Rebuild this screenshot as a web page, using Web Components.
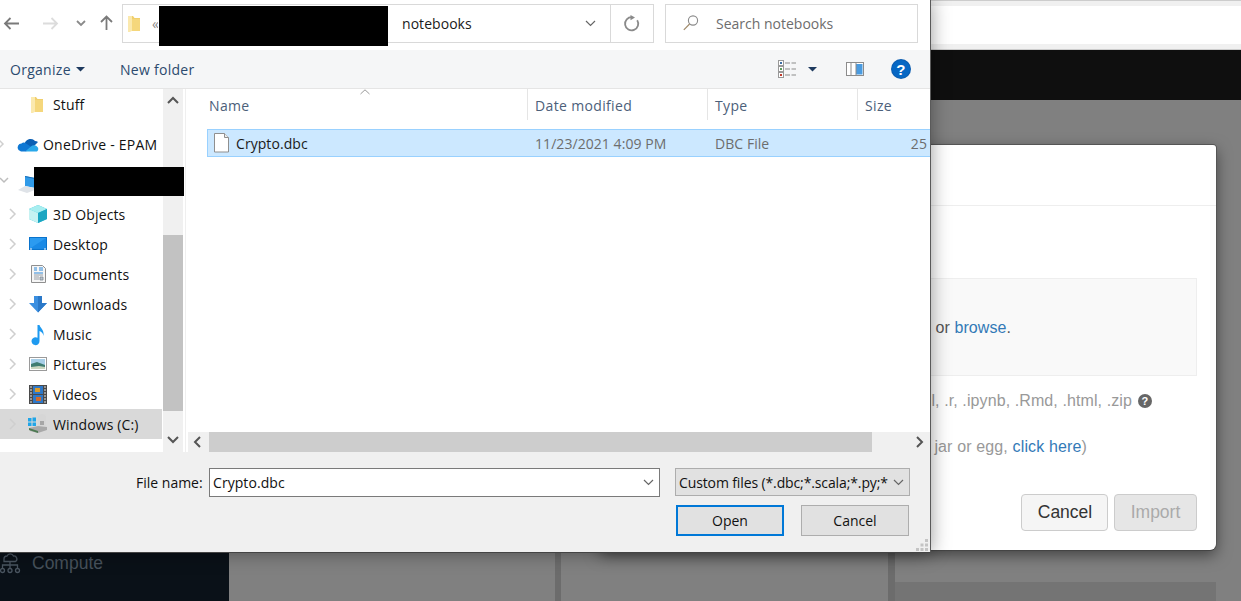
<!DOCTYPE html>
<html lang="en">
<head>
<meta charset="utf-8">
<title>Open file</title>
<style>
    html, body { margin: 0; padding: 0; height: 100%; overflow: hidden; background: #808080; }
</style>
</head>
<body>
<app-desktop>
    <page-backdrop></page-backdrop>
    <import-modal></import-modal>
    <file-dialog></file-dialog>
</app-desktop>

<script>
const ICONS = {
    back: '<path d="M1 6.5h14M6.5 1 1 6.5 6.5 12" fill="none" stroke="#7a7a7a" stroke-width="1.8"/>',
    forward: '<path d="M0 6.5h14M8.5 1 14 6.5 8.5 12" fill="none" stroke="#dcdcdc" stroke-width="1.8"/>',
    recent: '<path d="M1 1l4 4 4-4" fill="none" stroke="#8a8a8a" stroke-width="1.8"/>',
    up: '<path d="M6.5 15V1.5M1 7l5.5-5.5L12 7" fill="none" stroke="#7a7a7a" stroke-width="1.8"/>',
    folder: '<path d="M0 1h5l1.5 2H12v13H3l-3 1z" fill="#f0cf6c"/><path d="M0 1h4v15l-3 1H0z" fill="#fbe9ae"/><path d="M4 4h8v12H4z" fill="#f5d77c"/>',
    chevronDown: '<path d="M1 1l4.5 4.5L10 1" fill="none" stroke="#666" stroke-width="1.2"/>',
    refresh: '<path d="M13.2 5.2A6.6 6.6 0 1 1 8 2.2" fill="none" stroke="#8a8a8a" stroke-width="1.8"/><path d="M6.5 0v5.2L11 2.4z" fill="#8a8a8a"/>',
    search: '<circle cx="10" cy="5.5" r="4.6" fill="none" stroke="#8a8a8a" stroke-width="1.1"/><path d="M6.6 9 .8 14.8" stroke="#a08a6a" stroke-width="1.2"/>',
    caret: '<path d="M0 0h9L4.500 4.500z" fill="#1e3a5f"/>',
    views: '<rect x=".5" y=".5" width="5" height="5" fill="#fff" stroke="#999"/><rect x=".5" y="6.5" width="5" height="5" fill="#fff" stroke="#999"/><rect x=".5" y="12.5" width="5" height="5" fill="#fff" stroke="#999"/><rect x="2" y="2" width="2" height="2" fill="#3c6ea5"/><rect x="2" y="8" width="2" height="2" fill="#5b9a5b"/><rect x="2" y="14" width="2" height="2" fill="#c0392b"/><path d="M7 3h5M13.500 3h4.500M7 9h5M13.500 9h4.500M7 15h5M13.500 15h4.500" stroke="#8c8c8c" stroke-width="1.200"/>',
    pane: '<rect x=".5" y=".5" width="17" height="13" fill="#fff" stroke="#8c8c8c"/><rect x="10" y="2" width="6.500" height="10.500" fill="#4a9be0"/><path d="M5 1v12M10 1v12" stroke="#8c8c8c"/>',
    help: '<circle cx="10" cy="10" r="10" fill="#0a5cb0"/><circle cx="10" cy="10" r="9" fill="#0667c4"/><text x="10" y="15.500" text-anchor="middle" font-family="Liberation Sans, sans-serif" font-size="15" font-weight="700" fill="#fff">?</text>',
    sortUp: '<path d="M.5 5 5 .8 9.500 5" fill="none" stroke="#9a9a9a"/>',
    file: '<path d="M.5.5h10l4 4v14.500H.5z" fill="#fff" stroke="#8f8f8f"/><path d="M10.500.5v4h4" fill="#eee" stroke="#8f8f8f"/>',
    onedrive: '<path d="M7 5.500a6 6 0 0 1 10-1.500 5 5 0 0 1 3 1l-6 6-8-2z" fill="#0a5fb4"/><path d="M.5 13a4 4 0 0 1 3-6.500 3.500 3.500 0 0 1 3.500-.8l6 4-5 4.800H3z" fill="#0f78d4"/><path d="M7.500 14.500 13 9.500a4.500 4.500 0 0 1 6.500.500A3 3 0 0 1 19 14.500z" fill="#29a8ea"/>',
    laptop: '<path d="M7 5l10 2v10l-10-2z" fill="#2f9ae8"/><path d="M7 5l10 2v1L7 6z" fill="#1c6fb8"/><path d="M0 19l7-4 10 2 0 2-8 3z" fill="#dfe3e8"/>',
    cube: '<path d="M9 0l9 4v10l-9 4-9-4V4z" fill="#37c6d8"/><path d="M9 0l9 4-9 4-9-4z" fill="#a8eef0"/><path d="M0 4l9 4v10l-9-4z" fill="#c6f2f2"/><path d="M9 8l9-4v10l-9 4z" fill="#1ba6c2"/>',
    desktop: '<rect width="18" height="13" fill="#0a73cc"/><rect x="1" y="1" width="16" height="10.500" fill="#2c9bf0"/><path d="M1 11.500 17 1v10.500z" fill="#1a8ae6"/><path d="M1 12h2M15 12h2" stroke="#fff"/>',
    documents: '<path d="M.5.500h11l3 3v14H.5z" fill="#f6f6f6" stroke="#8f8f8f"/><path d="M3 3h3M3 5h3M8 3h4M8 5h4M3 8h9" stroke="#2e89d8"/><path d="M3 10h9M3 12h5M3 14h5M9 12h3v3H9z" stroke="#808a94" fill="#b8c4ce" stroke-width=".8"/>',
    downloads: '<path d="M5 0h8v7h5l-9 9.500L0 7h5z" fill="#3b8fe0"/><path d="M9 0h4v7h5l-9 9.500z" fill="#2a78c8"/>',
    music: '<path d="M5.500 0h2c.5 3 5 4.500 4 11-.4-3-2-4-4-5v10a4 4 0 1 1-2-3.300z" fill="#1e9af0"/>',
    pictures: '<rect x=".5" y=".5" width="17" height="13" fill="#fff" stroke="#9a9a9a"/><rect x="2" y="2" width="14" height="10" fill="#a8cfe8"/><path d="M2 7l6-2 8 3v4H2z" fill="#3f7d72"/><path d="M2 10l8-1 6 1v2H2z" fill="#c9d6c0"/>',
    videos: '<rect width="18" height="19" fill="#4a4a4a"/><rect x="4" y="1" width="10" height="8" fill="#2e78c8"/><rect x="4" y="10" width="10" height="8" fill="#2e78c8"/><rect x="6" y="3" width="5" height="4" fill="#d89a2c"/><rect x="7" y="12" width="5" height="4" fill="#cf6a2c"/><path d="M1 2h2M1 5h2M1 8h2M1 11h2M1 14h2M1 17h2M15 2h2M15 5h2M15 8h2M15 11h2M15 14h2M15 17h2" stroke="#e6e6e6" stroke-width="1.200"/>',
    drive: '<path d="M0 4h3.500v3.500H0zM4.500 3.500H8v4H4.500zM0 8.500h3.500V12H0zM4.500 8.500H8V12H4.500z" fill="#1fa5e8"/><path d="M10 3a4 3 0 0 1 8 0v9h-8z" fill="#d6d6d6"/><path d="M12 7h4v4h-4z" fill="#a6a6a6"/><path d="M1 14l9-2 9 1v3l-9 3-8-2z" fill="#a9a9a9"/><path d="M1 16l9 3v-2l-9-3z" fill="#4d7a52"/>',
    compute: '<g fill="none" stroke="#4a5560" stroke-width="1.300"><path d="M4 7a3 3 0 0 1 3-3 3.500 3.500 0 0 1 6.500 0 3 3 0 0 1 2 5.500H4z"/><path d="M10 9.500v7M2.500 16.500v-3.500h15v3.500"/><circle cx="2.500" cy="18.500" r="2"/><circle cx="10" cy="18.500" r="2"/><circle cx="17.500" cy="18.500" r="2"/></g>',
    navUp: '<path d="M1 7l5-5 5 5" fill="none" stroke="#555" stroke-width="2"/>',
    navDown: '<path d="M1 1l5 5 5-5" fill="none" stroke="#555" stroke-width="2"/>',
    navLeft: '<path d="M7 1 2 6l5 5" fill="none" stroke="#555" stroke-width="2"/>',
    navRight: '<path d="M1 1l5 5-5 5" fill="none" stroke="#555" stroke-width="2"/>',
    treeRight: '<path d="M1 1l5 5-5 5" fill="none" stroke="#cfcfcf" stroke-width="1.500"/>',
    treeDown: '<path d="M1 2l4 4 4-4" fill="none" stroke="#bdbdbd" stroke-width="1.500"/>',
    circleHelp: '<circle cx="7" cy="7" r="7" fill="#666"/><text x="7" y="11" text-anchor="middle" font-family="Liberation Sans, sans-serif" font-size="11" font-weight="700" fill="#fff">?</text>',
    grip: '<path d="M9 0h3v3H9zM4.500 4.500h3v3h-3zM9 4.500h3v3H9zM0 9h3v3H0zM4.500 9h3v3h-3zM9 9h3v3H9z" fill="#c4c4c4"/>'
};

class AppIcon extends HTMLElement {
    connectedCallback() {
        const w = this.getAttribute('w') || 16;
        const h = this.getAttribute('h') || 16;
        this.attachShadow({ mode: 'open' });
        this.shadowRoot.innerHTML = `
            <style>
                :host { display: inline-flex; flex: none; width: ${w}px; height: ${h}px; }
                svg { display: block; overflow: visible; }
            </style>
            <svg width="${w}" height="${h}" viewBox="0 0 ${w} ${h}">${ICONS[this.getAttribute('name')] || ''}</svg>
        `;
    }
}

class AppDesktop extends HTMLElement {
    constructor() {
        super();
        this.attachShadow({ mode: 'open' });
        this.shadowRoot.innerHTML = `
            <style>
                :host { display: block; position: relative; width: 1241px; height: 601px; overflow: hidden; }
            </style>
            <slot></slot>
        `;
    }
}

class PageBackdrop extends HTMLElement {
    constructor() {
        super();
        this.attachShadow({ mode: 'open' });
        this.shadowRoot.innerHTML = `
            <style>
                :host { display: flex; flex-direction: column; height: 601px; background: #808080; font-family: "Liberation Sans", Arial, sans-serif; }
                .browser { height: 50px; box-sizing: border-box; background: #fff; border-top: 1px solid #ccc; border-bottom: 1px solid #ccc; box-shadow: inset 0 5px 0 #f0f0f0, inset 0 -5px 0 #f0f0f0; }
                .topnav { height: 50px; background: #0f0f0f; }
                .content { flex: 1; display: flex; min-height: 0; }
                .sidebar { width: 229px; background: #0a1118; display: flex; flex-direction: column; justify-content: flex-end; padding-bottom: 26px; box-sizing: border-box; }
                .item { display: flex; align-items: center; gap: 12px; height: 24px; color: #47525c; font-size: 17.500px; }
                .pane { width: 326px; }
                .bar { width: 6px; background: #6c6c6c; }
                .mid { width: 327px; }
                .right { flex: 1; display: flex; flex-direction: column; justify-content: flex-end; }
                .band { height: 19px; width: 321px; background: #747474; }
            </style>
            <div class="browser"></div>
            <div class="topnav"></div>
            <div class="content">
                <div class="sidebar">
                    <div class="item"><app-icon name="compute" w="20" h="22"></app-icon><span>Compute</span></div>
                </div>
                <div class="pane"></div>
                <div class="bar"></div>
                <div class="mid"></div>
                <div class="bar" style="width:7px"></div>
                <div class="right"><div class="band"></div></div>
            </div>
        `;
    }
}

class ImportModal extends HTMLElement {
    constructor() {
        super();
        this.attachShadow({ mode: 'open' });
        this.shadowRoot.innerHTML = `
            <style>
                :host { display: flex; flex-direction: column; position: absolute; left: 600px; top: 145px; width: 616px; height: 405px; box-sizing: border-box; background: #fff; border-radius: 0 3px 6px 0; box-shadow: 0 1px 0 #444, 1px 0 0 #555, 0 -1px 0 #555, 0 5px 15px rgba(0,0,0,.5); font: 16px "Liberation Sans", Arial, sans-serif; color: #999; }
                header { height: 60px; flex: none; border-bottom: 1px solid #eee; }
                .body { flex: 1; padding: 72px 19px 0 0; display: flex; flex-direction: column; }
                .drop { height: 98px; box-sizing: border-box; background: #f9f9f9; border: 1px solid #eee; display: flex; align-items: center; justify-content: flex-end; padding: 2px 185px 0 0; color: #555; letter-spacing: .08px; }
                a { color: #337ab7; text-decoration: none; }
                .line { display: flex; justify-content: flex-end; align-items: center; height: 20px; }
                .formats { margin-top: 15px; padding-right: 45px; gap: 6px; letter-spacing: .1px; }
                .lib { margin-top: 26px; padding-right: 110px; white-space: pre; letter-spacing: .14px; }
                footer { display: flex; justify-content: flex-end; gap: 6px; padding: 0 19px 19px 0; }
                button { height: 37px; box-sizing: border-box; border-radius: 4px; border: 1px solid #ccc; font: 17.500px "Liberation Sans", Arial, sans-serif; padding: 0; }
                .cancel { width: 87px; background: #f5f5f5; color: #333; padding-left: 1px; }
                .import { width: 83px; background: #e6e6e6; color: #aaa; }
            </style>
            <header></header>
            <div class="body">
                <div class="drop"><span>or <a>browse</a>.</span></div>
                <div class="line formats"><span>l, .r, .ipynb, .Rmd, .html, .zip</span><app-icon name="circleHelp" w="14" h="14"></app-icon></div>
                <div class="line lib"><span>jar or egg, <a>click here</a>)</span></div>
            </div>
            <footer>
                <button class="cancel">Cancel</button>
                <button class="import">Import</button>
            </footer>
        `;
    }
}

class NavBar extends HTMLElement {
    constructor() {
        super();
        this.attachShadow({ mode: 'open' });
        this.shadowRoot.innerHTML = `
            <style>
                :host { display: flex; align-items: center; height: 50px; flex: none; background: #fff; padding-bottom: 4px; box-sizing: border-box; font-size: 14px; color: #1a1a1a; }
                .arrows { display: flex; align-items: center; width: 122px; flex: none; padding-left: 4px; box-sizing: border-box; }
                .address { width: 532px; height: 39px; box-sizing: border-box; border: 1px solid #d9d9d9; display: flex; align-items: center; flex: none; }
                .crumb { flex: 1; display: flex; align-items: center; padding-left: 5px; }
                .crumb span.more { margin-left: 12px; color: #8a8a8a; width: 6px; overflow: hidden; }
                .crumb span.name { margin-left: 244px; letter-spacing: .05px; }
                .drop { width: 25px; display: flex; align-items: center; }
                .refresh { width: 43px; height: 100%; border-left: 1px solid #d9d9d9; display: flex; align-items: center; justify-content: center; box-sizing: border-box; }
                .search { margin-left: 11px; width: 253px; height: 39px; box-sizing: border-box; border: 1px solid #d9d9d9; display: flex; align-items: center; padding-left: 17px; color: #6d6d6d; flex: none; }
                .search span { margin-left: 17px; }
            </style>
            <div class="arrows">
                <app-icon name="back" w="16" h="13"></app-icon>
                <app-icon name="forward" w="15" h="13" style="margin-left:23px"></app-icon>
                <app-icon name="recent" w="10" h="6" style="margin-left:18px"></app-icon>
                <app-icon name="up" w="13" h="16" style="margin-left:14px"></app-icon>
            </div>
            <div class="address">
                <div class="crumb">
                    <app-icon name="folder" w="12" h="17"></app-icon>
                    <span class="more">«</span>
                    <span class="name">notebooks</span>
                </div>
                <div class="drop"><app-icon name="chevronDown" w="11" h="7"></app-icon></div>
                <div class="refresh"><app-icon name="refresh" w="16" h="16"></app-icon></div>
            </div>
            <div class="search">
                <app-icon name="search" w="16" h="16"></app-icon>
                <span>Search notebooks</span>
            </div>
        `;
    }
}

class ToolBar extends HTMLElement {
    constructor() {
        super();
        this.attachShadow({ mode: 'open' });
        this.shadowRoot.innerHTML = `
            <style>
                :host { display: flex; align-items: center; height: 39px; flex: none; box-sizing: border-box; background: #f5f6f7; border-bottom: 1px solid #e5e5e5; padding: 0 19px 0 10px; font-size: 14px; color: #2c4a6e; letter-spacing: .28px; }
                .organize { display: flex; align-items: center; gap: 5px; width: 74px; }
                .new { margin-left: 36px; }
                .tools { margin-left: auto; display: flex; align-items: center; }
            </style>
            <div class="organize"><span>Organize</span><app-icon name="caret" w="9" h="5"></app-icon></div>
            <span class="new">New folder</span>
            <div class="tools">
                <app-icon name="views" w="18" h="18"></app-icon>
                <app-icon name="caret" w="9" h="5" style="margin-left:12px"></app-icon>
                <app-icon name="pane" w="18" h="14" style="margin-left:29px"></app-icon>
                <app-icon name="help" w="20" h="20" style="margin-left:27px"></app-icon>
            </div>
        `;
    }
}

class TreeRow extends HTMLElement {
    connectedCallback() {
        const chev = this.getAttribute('chev');
        const w = this.getAttribute('w') || 18;
        const h = this.getAttribute('h') || 18;
        const arrow = chev ? `<app-icon name="${chev}" w="9" h="12"></app-icon>` : '';
        this.attachShadow({ mode: 'open' });
        this.shadowRoot.innerHTML = `
            <style>
                :host { display: flex; align-items: center; height: 30px; box-sizing: border-box; font-size: 14px; color: #111; white-space: nowrap; letter-spacing: .14px; }
                :host([selected]) { background: #d9d9d9; }
                .chev { width: var(--icon, 29px); flex: none; display: flex; align-items: center; }
                .chev app-icon { margin-left: var(--chev, 9px); }
                .icon { width: calc(var(--label, 53px) - var(--icon, 29px)); flex: none; display: flex; align-items: center; }
            </style>
            <div class="chev">${arrow}</div>
            <div class="icon"><app-icon name="${this.getAttribute('icon')}" w="${w}" h="${h}"></app-icon></div>
            <slot></slot>
        `;
    }
}

class TreePanel extends HTMLElement {
    constructor() {
        super();
        this.attachShadow({ mode: 'open' });
        this.shadowRoot.innerHTML = `
            <style>
                :host { display: flex; width: 187px; flex: none; background: #fff; }
                .rows { width: 162px; flex: none; overflow: hidden; }
                .bar { width: 20px; margin-left: 1px; flex: none; background: #f0f0f0; display: flex; flex-direction: column; align-items: center; box-sizing: border-box; }
                .thumb { width: 100%; height: 176px; margin-top: 131px; background: #c2c2c2; }
                .sep { width: 1px; margin-left: 2px; background: #efefef; }
            </style>
            <div class="rows"><slot></slot></div>
            <div class="bar">
                <app-icon name="navUp" w="12" h="8" style="margin-top:7px"></app-icon>
                <div class="thumb"></div>
                <app-icon name="navDown" w="12" h="8" style="margin-top:25px"></app-icon>
            </div>
            <div class="sep"></div>
        `;
    }
}

class ColumnHead extends HTMLElement {
    constructor() {
        super();
        this.attachShadow({ mode: 'open' });
        this.shadowRoot.innerHTML = `
            <style>
                :host { display: flex; flex: none; position: relative; height: 31px; box-sizing: border-box; align-items: center; padding-left: var(--pad, 7px); padding-top: 1px; width: var(--w, 180px); border-right: 1px solid #e5e5e5; font-size: 14px; color: #4c607a; letter-spacing: .35px; }
                :host(:last-of-type) { border-right: 0; }
            </style>
            <slot></slot>
        `;
    }
}

class FileList extends HTMLElement {
    constructor() {
        super();
        this.attachShadow({ mode: 'open' });
        this.shadowRoot.innerHTML = `
            <style>
                :host { display: flex; flex-direction: column; flex: 1; min-width: 0; background: #fff; font-size: 14px; position: relative; }
                .heads { display: flex; flex: none; }
                .sort { position: absolute; left: 173px; top: 0; }
                .list { flex: 1; padding: 9px 0 0 20px; min-height: 0; overflow: hidden; }
                .row { height: 28px; box-sizing: border-box; display: flex; align-items: center; background: #cce8ff; border: 1px solid #99d1ff; border-right: 0; white-space: nowrap; color: #6d6d6d; letter-spacing: .06px; }
                .name { width: 327px; flex: none; display: flex; align-items: center; gap: 7px; padding-left: 6px; box-sizing: border-box; color: #1a1a1a; }
                .date { width: 180px; flex: none; }
                .type { width: 150px; flex: none; }
                .size { flex: 1; text-align: right; padding-right: 3px; }
                .hbar { height: 20px; flex: none; margin-left: 1px; background: #f0f0f0; display: flex; align-items: center; }
                .thumb { width: 663px; height: 100%; margin-left: 7px; background: #cdcdcd; }
            </style>
            <div class="heads">
                <column-head style="--w:341px;--pad:22px">Name</column-head>
                <column-head style="--w:180px">Date modified</column-head>
                <column-head style="--w:150px">Type</column-head>
                <column-head style="--w:72px;--pad:7px">Size</column-head>
            </div>
            <app-icon class="sort" name="sortUp" w="10" h="6"></app-icon>
            <div class="list">
                <div class="row">
                    <div class="name"><app-icon name="file" w="15" h="20"></app-icon><span>Crypto.dbc</span></div>
                    <div class="date">11/23/2021 4:09 PM</div>
                    <div class="type">DBC File</div>
                    <div class="size">25</div>
                </div>
            </div>
            <div class="hbar">
                <app-icon name="navLeft" w="9" h="12" style="margin-left:5px"></app-icon>
                <div class="thumb"></div>
                <app-icon name="navRight" w="8" h="12" style="margin-left:44px"></app-icon>
            </div>
        `;
    }
}

class DialogFooter extends HTMLElement {
    constructor() {
        super();
        this.attachShadow({ mode: 'open' });
        this.shadowRoot.innerHTML = `
            <style>
                :host { display: block; height: 100px; flex: none; box-sizing: border-box; background: #f0f0f0; padding-top: 16px; font-size: 14px; color: #111; position: relative; }
                .row { display: flex; align-items: flex-start; padding-left: 136px; }
                .label { width: 73px; height: 29px; line-height: 29px; flex: none; }
                .input { width: 451px; height: 29px; box-sizing: border-box; border: 1px solid #7a7a7a; background: #fff; display: flex; align-items: center; padding: 0 5px 0 3px; flex: none; letter-spacing: .06px; }
                .input span { flex: 1; }
                .select { margin-left: 15px; width: 235px; height: 28px; box-sizing: border-box; border: 1px solid #adadad; background: #e1e1e1; display: flex; align-items: center; padding: 0 5px 0 3px; flex: none; }
                .select span { flex: none; white-space: nowrap; letter-spacing: -.12px; }
                .select app-icon { margin-left: auto; }
                .buttons { display: flex; gap: 17px; padding-left: 676px; margin-top: 8px; }
                button { width: 108px; height: 31px; box-sizing: border-box; background: #e1e1e1; border: 1px solid #adadad; color: #111; font: inherit; padding: 0; }
                button.primary { border: 2px solid #0078d7; }
                .grip { position: absolute; right: 2px; bottom: 1px; }
            </style>
            <div class="row">
                <span class="label">File name:</span>
                <div class="input"><span>Crypto.dbc</span><app-icon name="chevronDown" w="11" h="7"></app-icon></div>
                <div class="select"><span>Custom files (*.dbc;*.scala;*.py;*</span><app-icon name="chevronDown" w="11" h="7"></app-icon></div>
            </div>
            <div class="buttons">
                <button class="primary">Open</button>
                <button>Cancel</button>
            </div>
            <app-icon class="grip" name="grip" w="12" h="12"></app-icon>
        `;
    }
}

class FileDialog extends HTMLElement {
    constructor() {
        super();
        this.attachShadow({ mode: 'open' });
        this.shadowRoot.innerHTML = `
            <style>
                :host { display: flex; flex-direction: column; position: absolute; left: 0; top: 0; width: 931px; height: 553px; box-sizing: border-box; background: #fff; border-right: 1px solid #5a5a5a; border-bottom: 1px solid #444; box-shadow: 0 0 18px rgba(0,0,0,.4); font-family: "Open Sans", "Noto Sans", sans-serif; }
                .main { flex: 1; display: flex; min-height: 0; }
                .redact { position: absolute; background: #000; }
                .top { left: 159px; top: 6px; width: 229px; height: 40px; }
                .host-name { left: 34px; top: 167px; width: 150px; height: 29px; }
                tree-row.one { --chev: -3px; --icon: 18px; --label: 43px; margin-top: 10px; letter-spacing: .22px; }
                tree-row.pc { --chev: -1px; --icon: 18px; --label: 43px; margin-top: 8px; }
                tree-row.stuff { --icon: 31px; }
                tree-row.first { margin-top: 2px; }
            </style>
            <nav-bar></nav-bar>
            <tool-bar></tool-bar>
            <div class="main">
                <tree-panel>
                    <tree-row class="stuff" icon="folder" w="12" h="17">Stuff</tree-row>
                    <tree-row class="one" icon="onedrive" chev="treeRight" w="20" h="15">OneDrive - EPAM</tree-row>
                    <tree-row class="pc" icon="laptop" chev="treeDown" w="18" h="22"></tree-row>
                    <tree-row class="first" icon="cube" chev="treeRight">3D Objects</tree-row>
                    <tree-row icon="desktop" chev="treeRight" w="18" h="14">Desktop</tree-row>
                    <tree-row icon="documents" chev="treeRight" w="15" h="18" style="--icon:31px">Documents</tree-row>
                    <tree-row icon="downloads" chev="treeRight" h="17">Downloads</tree-row>
                    <tree-row icon="music" chev="treeRight" w="13" h="18" style="--icon:32px">Music</tree-row>
                    <tree-row icon="pictures" chev="treeRight" h="14">Pictures</tree-row>
                    <tree-row icon="videos" chev="treeRight" h="19">Videos</tree-row>
                    <tree-row icon="drive" chev="treeRight" w="20" h="20" selected style="--icon:28px">Windows (C:)</tree-row>
                </tree-panel>
                <file-list></file-list>
            </div>
            <dialog-footer></dialog-footer>
            <div class="redact top"></div>
            <div class="redact host-name"></div>
        `;
    }
}

customElements.define('app-icon', AppIcon);
customElements.define('app-desktop', AppDesktop);
customElements.define('page-backdrop', PageBackdrop);
customElements.define('import-modal', ImportModal);
customElements.define('nav-bar', NavBar);
customElements.define('tool-bar', ToolBar);
customElements.define('tree-row', TreeRow);
customElements.define('tree-panel', TreePanel);
customElements.define('column-head', ColumnHead);
customElements.define('file-list', FileList);
customElements.define('dialog-footer', DialogFooter);
customElements.define('file-dialog', FileDialog);
</script>
</body>
</html>
